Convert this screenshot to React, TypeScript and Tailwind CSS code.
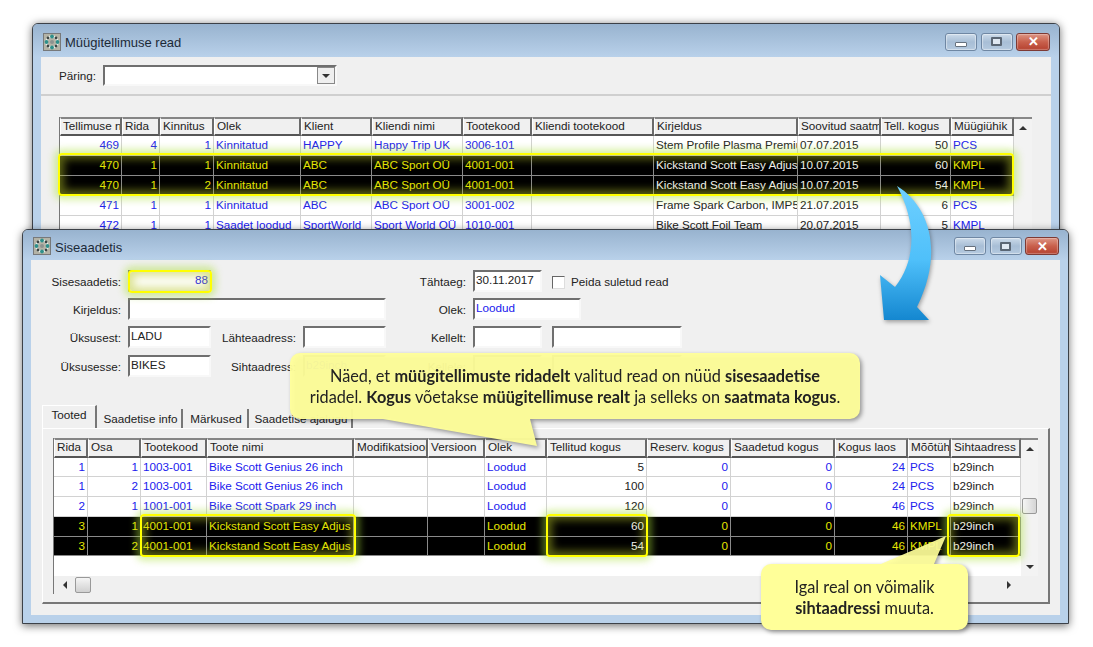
type Cell = { text: string; right?: boolean; black?: boolean };

const orderCols = 'grid-cols-[62px_38px_54px_87px_71px_91px_69px_122px_144px_83px_70px_63px]';
const shipCols = 'grid-cols-[34px_53px_66px_147px_74px_57px_62px_100px_84px_104px_73px_43px_70px]';

const orderHead = ['Tellimuse n', 'Rida', 'Kinnitus', 'Olek', 'Klient', 'Kliendi nimi', 'Tootekood', 'Kliendi tootekood', 'Kirjeldus', 'Soovitud saatm', 'Tell. kogus', 'Müügiühik'];
const shipHead = ['Rida', 'Osa', 'Tootekood', 'Toote nimi', 'Modifikatsioon', 'Versioon', 'Olek', 'Tellitud kogus', 'Reserv. kogus', 'Saadetud kogus', 'Kogus laos', 'Mõõtühik', 'Sihtaadress'];

function orderRow(nr: string, rida: string, kin: string, olek: string, klient: string, nimi: string, kood: string, kirj: string, kp: string, kogus: string, yhik: string): Cell[] {
  return [
    { text: nr, right: true },
    { text: rida, right: true },
    { text: kin, right: true },
    { text: olek },
    { text: klient },
    { text: nimi },
    { text: kood },
    { text: '' },
    { text: kirj, black: true },
    { text: kp, black: true },
    { text: kogus, right: true, black: true },
    { text: yhik },
  ];
}

function shipRow(rida: string, osa: string, kood: string, nimi: string, kogus: string, laos: string, yhik: string): Cell[] {
  return [
    { text: rida, right: true },
    { text: osa, right: true },
    { text: kood },
    { text: nimi },
    { text: '' },
    { text: '' },
    { text: 'Loodud' },
    { text: kogus, right: true, black: true },
    { text: '0', right: true },
    { text: '0', right: true },
    { text: laos, right: true },
    { text: yhik },
    { text: 'b29inch', black: true },
  ];
}

const orderRows = [
  { selected: false, cells: orderRow('469', '4', '1', 'Kinnitatud', 'HAPPY', 'Happy Trip UK', '3006-101', 'Stem Profile Plasma Premiu', '07.07.2015', '50', 'PCS') },
  { selected: true, cells: orderRow('470', '1', '1', 'Kinnitatud', 'ABC', 'ABC Sport OÜ', '4001-001', 'Kickstand Scott Easy Adjus', '10.07.2015', '60', 'KMPL') },
  { selected: true, cells: orderRow('470', '1', '2', 'Kinnitatud', 'ABC', 'ABC Sport OÜ', '4001-001', 'Kickstand Scott Easy Adjus', '10.07.2015', '54', 'KMPL') },
  { selected: false, cells: orderRow('471', '1', '1', 'Kinnitatud', 'ABC', 'ABC Sport OÜ', '3001-002', 'Frame Spark Carbon, IMP5', '21.07.2015', '6', 'PCS') },
  { selected: false, cells: orderRow('472', '1', '1', 'Saadet loodud', 'SportWorld', 'Sport World OÜ', '1010-001', 'Bike Scott Foil Team', '20.07.2015', '5', 'KMPL') },
];

const shipRows = [
  { selected: false, cells: shipRow('1', '1', '1003-001', 'Bike Scott Genius 26 inch', '5', '24', 'PCS') },
  { selected: false, cells: shipRow('1', '2', '1003-001', 'Bike Scott Genius 26 inch', '100', '24', 'PCS') },
  { selected: false, cells: shipRow('2', '1', '1001-001', 'Bike Scott Spark 29 inch', '120', '46', 'PCS') },
  { selected: true, cells: shipRow('3', '1', '4001-001', 'Kickstand Scott Easy Adjus', '60', '46', 'KMPL') },
  { selected: true, cells: shipRow('3', '2', '4001-001', 'Kickstand Scott Easy Adjus', '54', '46', 'KMPL') },
];

function AppIcon() {
  return (
    <svg width="18" height="18" viewBox="0 0 18 18" className="shrink-0">
      <rect width="18" height="18" fill="#77797a" />
      <rect x="1" y="1" width="16" height="16" fill="#b4b3a6" />
      <circle cx="9" cy="9" r="5.5" fill="none" stroke="#e8efe9" strokeWidth="2.5" />
      <circle cx="9" cy="3.5" r="1.9" fill="#2f8f8a" />
      <circle cx="9" cy="14.5" r="1.9" fill="#2f8f8a" />
      <circle cx="3.5" cy="9" r="1.9" fill="#2f8f8a" />
      <circle cx="14.5" cy="9" r="1.9" fill="#2f8f8a" />
      <circle cx="5" cy="5" r="1.4" fill="#3d4544" />
      <circle cx="13" cy="5" r="1.4" fill="#3d4544" />
      <circle cx="5" cy="13" r="1.4" fill="#3d4544" />
      <circle cx="13" cy="13" r="1.4" fill="#3d4544" />
      <circle cx="9" cy="9" r="2" fill="#8c9390" />
    </svg>
  );
}

function WindowButtons() {
  return (
    <div className="flex gap-[3.5px]">
      <div className="flex h-[18px] w-[32px] items-end justify-center rounded-[3px] border border-[#6f87a3] bg-gradient-to-b from-[#ccdbea] via-[#a8bed6] to-[#b4c9df] pb-[3px] shadow-[inset_0_0_1px_1px_rgba(255,255,255,0.45)]">
        <div className="h-[5px] w-[12px] rounded-[1px] border border-[#66717e] bg-white" />
      </div>
      <div className="flex h-[18px] w-[32px] items-center justify-center rounded-[3px] border border-[#6f87a3] bg-gradient-to-b from-[#ccdbea] via-[#a8bed6] to-[#b4c9df] shadow-[inset_0_0_1px_1px_rgba(255,255,255,0.45)]">
        <div className="h-[9px] w-[11px] rounded-[1px] border-2 border-[#5a6674] bg-[#dfe8f2]" />
      </div>
      <div className="flex h-[18px] w-[34px] items-center justify-center rounded-[3px] border border-[#7d3a34] bg-gradient-to-b from-[#dc9484] via-[#c9604c] to-[#b5402f] font-['Liberation_Sans',sans-serif] text-[13px] leading-none font-bold text-white shadow-[inset_0_0_1px_1px_rgba(255,255,255,0.3)]">
        ✕
      </div>
    </div>
  );
}

function TitleBar({ title, height }: { title: string; height: string }) {
  return (
    <div className={`flex items-center justify-between bg-gradient-to-b from-[#98b3cf] to-[#b9d1ea] pt-[2px] pr-[9px] pl-[10px] ${height}`}>
      <div className="flex items-center gap-[4px]">
        <AppIcon />
        <span className="mt-[3px] font-['Liberation_Sans',sans-serif] text-[13px] text-[#1c2a38]">{title}</span>
      </div>
      <WindowButtons />
    </div>
  );
}

function Arrow({ dir }: { dir: 'up' | 'down' | 'left' | 'right' }) {
  const points = { up: '0,5 4,1 8,5', down: '0,1 8,1 4,5', left: '5,0 5,8 1,4', right: '1,0 1,8 5,4' }[dir];
  const box = dir === 'up' || dir === 'down' ? '0 0 8 6' : '0 0 6 8';
  const size = dir === 'up' || dir === 'down' ? 'h-[6px] w-[8px]' : 'h-[8px] w-[6px]';
  return (
    <svg viewBox={box} className={size}>
      <polygon points={points} fill="#333" />
    </svg>
  );
}

function GridRow({ cols, cells, selected, height }: { cols: string; cells: Cell[]; selected: boolean; height: string }) {
  return (
    <div className={`grid ${cols} ${height} ${selected ? 'bg-black' : 'bg-white'}`}>
      {cells.map((c, i) => {
        let tone = 'text-[#2020ee]';
        if (selected) tone = c.black ? 'text-[#f2f2f2]' : 'text-[#e6e600]';
        else if (c.black) tone = 'text-[#222]';
        return (
          <div
            key={i}
            className={`overflow-hidden border-r border-b px-[2px] leading-[18px] whitespace-nowrap ${selected ? 'border-[#8a8a8a]' : 'border-[#d2d2d2]'} ${c.right ? 'text-right' : 'text-left'} ${tone}`}
          >
            {c.text}
          </div>
        );
      })}
    </div>
  );
}

function GridHead({ cols, labels, height }: { cols: string; labels: string[]; height: string }) {
  return (
    <div className={`grid ${cols} ${height}`}>
      {labels.map((l) => (
        <div
          key={l}
          className="overflow-hidden border-t-2 border-r-2 border-b-2 border-l border-t-[#858585] border-r-[#6a6a6a] border-b-[#555] border-l-white bg-[#f0f0f0] pl-[2px] leading-[14px] whitespace-nowrap text-[#222]"
        >
          {l}
        </div>
      ))}
    </div>
  );
}

function OrdersWindow() {
  return (
    <div className="absolute top-[23px] left-[32px] flex h-[230px] w-[1028px] flex-col overflow-hidden rounded-t-[6px] border border-[#3c4148] bg-[#b9d1ea] shadow-[0_1px_9px_rgba(0,0,0,0.55)]">
      <TitleBar title="Müügitellimuse read" height="h-[33px]" />
      <div className="mx-[8px] flex-1 bg-[#f0f0f0] font-['Liberation_Sans',sans-serif] text-[11.7px]">
        <div className="flex h-[39px] items-center gap-[8px] border-b-2 border-[#cfcfcf] pl-[18px]">
          <span className="w-[36px] whitespace-nowrap text-[#222]">Päring:</span>
          <div className="flex h-[21px] w-[234px] justify-end border-2 border-t-[#6f6f6f] border-r-[#f8f8f8] border-b-[#f8f8f8] border-l-[#6f6f6f] bg-white">
            <div className="flex w-[18px] items-center justify-center border border-[#888] bg-[#efefef]">
              <Arrow dir="down" />
            </div>
          </div>
        </div>
        <div className="mt-[21px] ml-[18px] flex w-[973px]">
          <div className="border-l border-[#777]">
            <GridHead cols={orderCols} labels={orderHead} height="h-[19px]" />
            {orderRows.map((r, i) => (
              <GridRow key={i} cols={orderCols} cells={r.cells} selected={r.selected} height="h-[20px]" />
            ))}
          </div>
          <div className="flex h-[120px] flex-1 flex-col items-center border-t-2 border-[#888] bg-[#f3f3f3] pt-[6px]">
            <Arrow dir="up" />
          </div>
        </div>
      </div>
    </div>
  );
}

function Field({ value, className, blue, right }: { value?: string; className?: string; blue?: boolean; right?: boolean }) {
  return (
    <div
      className={`h-[22px] overflow-hidden border-2 border-t-[#6f6f6f] border-r-[#f8f8f8] border-b-[#f8f8f8] border-l-[#6f6f6f] bg-white px-[1px] leading-[15px] ${blue ? 'text-[#2020ee]' : 'text-[#222]'} ${right ? 'text-right' : ''} ${className ?? ''}`}
    >
      {value}
    </div>
  );
}

function Label({ text }: { text: string }) {
  return <div className="pr-[7px] text-right leading-[23px] whitespace-nowrap text-[#222]">{text}</div>;
}

function ShipmentForm() {
  return (
    <div className="grid auto-rows-[22px] grid-cols-[97px_83px_92px_83px_87px_69px_10px_130px] gap-y-[6.2px] pt-[10px]">
      <Label text="Sisesaadetis:" />
      <Field value="88" blue right />
      <div className="col-span-2" />
      <Label text="Tähtaeg:" />
      <Field value="30.11.2017" />
      <div />
      <div className="flex items-center gap-[6px] pt-[2px]">
        <div className="h-[13px] w-[13px] shrink-0 border border-t-[#666] border-r-[#ddd] border-b-[#ddd] border-l-[#666] bg-white" />
        <span className="whitespace-nowrap text-[#222]">Peida suletud read</span>
      </div>

      <Label text="Kirjeldus:" />
      <Field className="col-span-3" />
      <Label text="Olek:" />
      <div className="col-span-3 flex">
        <Field value="Loodud" blue className="w-[108px]" />
      </div>

      <Label text="Üksusest:" />
      <Field value="LADU" />
      <Label text="Lähteaadress:" />
      <Field />
      <Label text="Kellelt:" />
      <Field />
      <div />
      <Field />

      <Label text="Üksusesse:" />
      <Field value="BIKES" />
      <Label text="Sihtaadress:" />
      <Field value="b29inch" blue />
      <Label text="Kellele:" />
      <Field />
      <div />
      <Field />
    </div>
  );
}

function Tabs() {
  return (
    <div className="mt-[29px] ml-[11px] flex h-[22px] items-end text-[#222]">
      <div className="z-10 flex h-[23px] w-[55px] items-start justify-center border-t border-r-2 border-l border-t-white border-r-[#777] border-l-white bg-[#f0f0f0]">Tooted</div>
      <div className="ml-[3px] flex h-[19px] w-[83px] items-start justify-center border-r-2 border-r-[#777] pt-[1px]">Saadetise info</div>
      <div className="ml-[2px] flex h-[19px] w-[64px] items-start justify-center border-r-2 border-r-[#777] pt-[1px]">Märkused</div>
      <div className="ml-[2px] flex h-[19px] w-[102px] items-start justify-center border-r-2 border-r-[#777] pt-[1px]">Saadetise ajalugu</div>
    </div>
  );
}

function ShipmentGrid() {
  return (
    <div className="h-[176px] w-[1008px] border-t border-r-2 border-b-2 border-l border-t-white border-r-[#777] border-b-[#777] border-l-white pt-[9px] pl-[10px]">
      <div className="w-[985px] border-l border-[#777]">
        <div className="flex">
          <div>
            <GridHead cols={shipCols} labels={shipHead} height="h-[20px]" />
            <div className="h-[118px] bg-white">
              {shipRows.map((r, i) => (
                <GridRow key={i} cols={shipCols} cells={r.cells} selected={r.selected} height="h-[19.75px]" />
              ))}
            </div>
          </div>
          <div className="relative flex h-[138px] flex-1 flex-col items-center justify-between border-t-2 border-[#888] bg-[#f3f3f3] py-[6px]">
            <Arrow dir="up" />
            <div className="absolute top-[58px] left-[1px] h-[16px] w-[15px] rounded-[2px] border border-[#999] bg-gradient-to-r from-[#f5f5f5] to-[#d5d5d5]" />
            <Arrow dir="down" />
          </div>
        </div>
        <div className="flex h-[18px] items-center bg-[#f0f0f0] pr-[26px] pl-[8px]">
          <Arrow dir="left" />
          <div className="ml-[7px] h-[16px] w-[16px] rounded-[2px] border border-[#999] bg-gradient-to-b from-[#f5f5f5] to-[#d0d0d0]" />
          <div className="flex-1" />
          <Arrow dir="right" />
        </div>
      </div>
    </div>
  );
}

function ShipmentWindow() {
  return (
    <div className="absolute top-[229px] left-[22px] flex h-[395px] w-[1047px] flex-col overflow-hidden rounded-t-[6px] border border-[#3c4148] bg-[#b9d1ea] shadow-[0_2px_9px_rgba(0,0,0,0.55)]">
      <TitleBar title="Siseaadetis" height="h-[30px]" />
      <div className="mx-[8px] mb-[8px] flex-1 bg-[#f0f0f0] font-['Liberation_Sans',sans-serif] text-[11.7px]">
        <ShipmentForm />
        <Tabs />
        <div className="ml-[11px]">
          <ShipmentGrid />
        </div>
      </div>
    </div>
  );
}

const glow = 'absolute rounded-[4px] border-[2.5px] border-[#ffff00] shadow-[0_0_7px_4px_rgba(170,225,60,0.45),inset_0_0_9px_4px_rgba(185,200,40,0.5)]';

function Highlights() {
  return (
    <>
      <div className={`${glow} top-[153px] left-[58px] h-[43px] w-[956px]`} />
      <div className={`${glow} top-[270px] left-[128px] h-[23px] w-[84px]`} />
      <div className={`${glow} top-[514px] left-[140px] h-[43px] w-[216px]`} />
      <div className={`${glow} top-[514px] left-[546px] h-[43px] w-[102px]`} />
      <div className={`${glow} top-[514px] left-[947px] h-[43px] w-[73px]`} />
    </>
  );
}

function BigArrow() {
  return (
    <svg width="1093" height="647" viewBox="0 0 1093 647" className="pointer-events-none absolute top-0 left-0">
      <defs>
        <linearGradient id="arrowFill" x1="0" y1="0" x2="0" y2="1">
          <stop offset="0" stopColor="#6fd0ff" />
          <stop offset="0.55" stopColor="#4fc0fa" />
          <stop offset="1" stopColor="#1487d0" />
        </linearGradient>
      </defs>
      <path
        d="M897 186 C928 205 945 250 917 307 L929 320 L884 320 L880 275 L895 287 C915 262 918 225 897 186 Z"
        fill="url(#arrowFill)"
        className="drop-shadow-[1px_2px_2px_rgba(0,0,0,0.35)]"
      />
    </svg>
  );
}

function MainCallout() {
  return (
    <div className="absolute top-[353px] left-[290px] h-[66px] w-[570px] text-center font-['Lato',sans-serif] text-[16.3px] leading-[21px] text-[#222] drop-shadow-[2px_2px_2px_rgba(0,0,0,0.4)]">
      <svg width="170" height="32" viewBox="0 0 170 32" className="absolute top-[66px] left-[93px]">
        <polygon points="0,0 147,0 154,27" fill="#ffff99" fillOpacity="0.95" />
      </svg>
      <div className="h-full rounded-[10px] bg-[#ffff99]/95 pt-[12px]">
        <p>
          Näed, et <b>müügitellimuste ridadelt</b> valitud read on nüüd <b>sisesaadetise</b>
        </p>
        <p>
          ridadel. <b>Kogus</b> võetakse <b>müügitellimuse realt</b> ja selleks on <b>saatmata kogus</b>.
        </p>
      </div>
    </div>
  );
}

function SmallCallout() {
  return (
    <div className="absolute top-[564px] left-[761px] h-[66px] w-[207px] text-center font-['Lato',sans-serif] text-[16.3px] leading-[21px] text-[#222] drop-shadow-[2px_2px_2px_rgba(0,0,0,0.4)]">
      <svg width="70" height="31" viewBox="0 0 70 31" className="absolute top-[-29px] left-[118px]">
        <polygon points="2,29 2,31 55,31 55,29 67,1" fill="#ffff99" fillOpacity="0.92" />
      </svg>
      <div className="relative h-full rounded-[10px] bg-[#ffff99] pt-[12px]">
        <p>Igal real on võimalik</p>
        <p>
          <b>sihtaadressi</b> muuta.
        </p>
      </div>
    </div>
  );
}

export default function App() {
  return (
    <div className="relative h-[647px] w-[1093px] overflow-hidden bg-white blur-[0.35px]">
      <OrdersWindow />
      <ShipmentWindow />
      <Highlights />
      <BigArrow />
      <MainCallout />
      <SmallCallout />
    </div>
  );
}
